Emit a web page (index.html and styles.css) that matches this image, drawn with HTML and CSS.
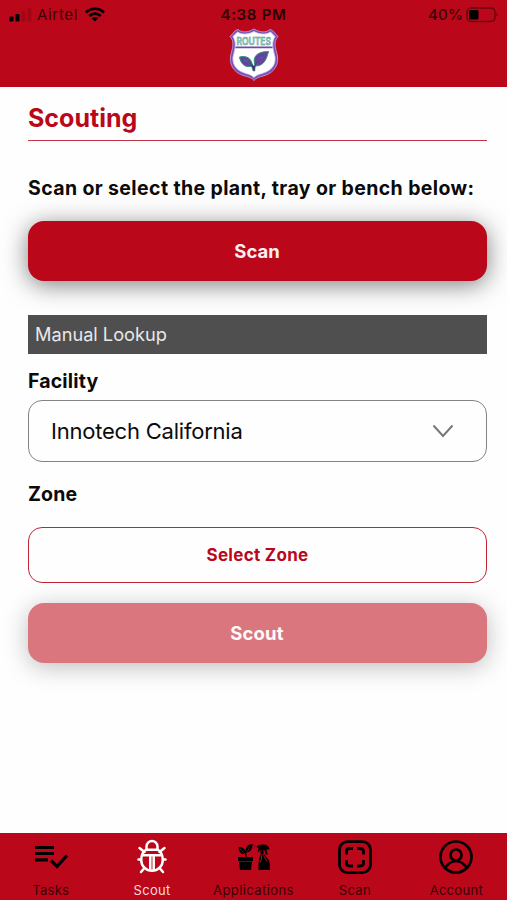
FILE: index.html
```html
<!DOCTYPE html>
<html lang="en">
<head>
<meta charset="utf-8">
<title>Scouting</title>
<link rel="stylesheet" href="styles.css">
</head>
<body>
<div class="app">
  <header class="header">
    <div class="status">
      <div class="carrier">
        <svg class="signal" width="25" height="16" viewBox="0 0 25 16"><rect x="1.500" y="10.500" width="4" height="5" rx="1"/><rect x="7.500" y="8" width="4" height="7.500" rx="1"/><g opacity=".12"><rect x="13.500" y="5" width="4" height="10.500" rx="1"/><rect x="19.500" y="2" width="4" height="13.500" rx="1"/></g></svg>
        <span class="carrier-name">Airtel</span>
        <svg class="wifi" width="20" height="15" viewBox="0 0 20 15" fill="none" stroke="#000" stroke-width="2.700"><path d="M1 5.500C6 .500 14 .500 19 5.500"/><path d="M4.300 9C7.500 5.700 12.500 5.700 15.700 9"/><path d="M10 14.500 6.700 11.300C8.500 9.500 11.500 9.500 13.300 11.300Z" fill="#000" stroke="none"/></svg>
      </div>
      <span class="time">4:38 PM</span>
      <div class="power">
        <span class="percent">40%</span>
        <svg width="33" height="16" viewBox="0 0 33 16"><rect x="1" y="1" width="28" height="13.500" rx="4" fill="none" stroke="#000" stroke-opacity=".42" stroke-width="1.500"/><rect x="3" y="3" width="9.500" height="9.500" rx="1.500"/><path d="M30.500 5q2.500 2.500 0 5Z" opacity=".4"/></svg>
      </div>
    </div>
    <svg class="logo" width="50" height="54" viewBox="0 0 50 54">
      <path d="M6.500 2.500L9 1.500C13 5 19 4.500 25 1C31 4.500 37 5 41 1.500L43.500 2.500L49 8.500C44 14 46.500 20 48.500 28C50 40 42 46 34 48C30 49 27 50 25 52.500C23 50 20 49 16 48C8 46 0 40 1.500 28C3.500 20 6 14 1 8.500Z" fill="#7951b4" stroke="#b58fd0" stroke-width="1"/>
      <path d="M8.500 4C13 7 20 6.500 25 3.500C30 6.500 37 7 41.500 4L46 8.500C42 15 44 21 46 29C47 39 40 43.500 33 45.500C29 46.500 27 47.500 25 49.500C23 47.500 21 46.500 17 45.500C10 43.500 3 39 4 29C6 21 8 15 4 8.500Z" fill="#fff" stroke="#dccded" stroke-width=".8"/>
      <path d="M6.500 19.300H43.500" stroke="#704aa8" stroke-width="1.800"/>
      <text x="7.500" y="16.500" class="logo-text" textLength="34.500" lengthAdjust="spacingAndGlyphs">ROUTES</text>
      <g fill="#6541a2" stroke="#319277" stroke-width="1"><path d="M10.500 29C18 27 23 31 23.500 38C17 40 12 37 10.500 29Z"/><path d="M39.500 23.500C28 23.500 22.500 29 26.500 38C35 38 37.500 31 39.500 23.500Z"/><path d="M15 32Q22 34 24 43L26 43Q25 36 34 29Q27 32 25 38Q21 33 15 32Z" fill="#48327b" stroke-width=".5"/></g>
    </svg>
  </header>
  <main class="content">
    <h1 class="title">Scouting</h1>
    <p class="prompt">Scan or select the plant, tray or bench below:</p>
    <button class="primary">Scan</button>
    <h2 class="section">Manual Lookup</h2>
    <div class="label facility">Facility</div>
    <div class="select"><span>Innotech California</span><svg width="22" height="14" viewBox="0 0 22 14" fill="none" stroke="#777" stroke-width="2"><path d="m1.500 1.500 9.500 10.500 9.500-10.500"/></svg></div>
    <div class="label zone">Zone</div>
    <button class="outline">Select Zone</button>
    <button class="primary disabled">Scout</button>
  </main>
  <nav class="tabs">
    <a class="tab"><svg width="36" height="36" viewBox="0 0 36 36" fill="none" stroke="#000" stroke-width="3.200"><path d="M2 8.500h19M2 14.500h19M2 20.800h13M18 21.500l6 6 10-11"/></svg><span class="name tasks">Tasks</span></a>
    <a class="tab active"><svg width="36" height="36" viewBox="0 0 36 36" fill="none" stroke="#fff" stroke-width="2.500" stroke-linecap="round"><path d="M12.500 10.500V7.500a5.500 5.500 0 0 1 11 0v3"/><path d="M12 10.800h12q4.800 3 4.800 10.200a10.800 10.800 0 0 1-21.600 0q0-7.200 4.800-10.200Z"/><path d="M8.500 16.300h19M16.300 16.500v14.200M19.700 16.500v14.200M5.500 9l5 4M30.500 9l-5 4M4.500 20.500H7M29 20.500h2.500M10.500 29 7 33M25.500 29l3.500 4"/></svg><span class="name scout">Scout</span></a>
    <a class="tab"><svg width="36" height="36" viewBox="0 0 36 36"><path d="M3 18h15v4h-1L16 31H5L4 22H3ZM10 18V15Q4 16 3.500 8Q9 8 10.500 12Q11 5 17.500 5Q18 12 11.500 14V18Z"/><path d="m11 15 4-7M5 10l5 5M4 22.500h13" fill="none" stroke="#a30819" stroke-width=".7"/><path d="M22 7q2-2 7-1.500Q34 6 34.500 10.500h-3Q32 14 33 15.500h-2Q29.500 13 29.500 11H28.500v4h-3V10.500q-1 2-3 3 1-3 1-4.500h-1ZM25.500 15.500h4l4.500 6q1 2 1 9.500H23.500q-.5-9 2-15.500Z"/><path d="M26.500 16.500v4l-1.500 3M28.500 16.500l3.500 6" fill="none" stroke="#b30a1b" stroke-width="1"/><path d="M18.500 6.500h1M18.500 9h1M20.500 7.500h1" stroke="#000" stroke-width=".8" opacity=".6"/></svg><span class="name applications">Applications</span></a>
    <a class="tab"><svg width="36" height="36" viewBox="0 0 36 36" fill="none" stroke="#000" stroke-width="2.800"><rect x="2.500" y="2.700" width="31" height="31" rx="8"/><path d="M9.500 15.500v-3q0-3 3-3H16M20 9.500h3.500q3 0 3 3v3M26.500 21v3q0 3-3 3H20M16 27h-3.500q-3 0-3-3V21"/></svg><span class="name scan">Scan</span></a>
    <a class="tab"><svg width="36" height="36" viewBox="0 0 36 36" fill="none" stroke="#000" stroke-width="2.700"><circle cx="18" cy="18" r="15.500"/><circle cx="18" cy="16" r="5.500"/><path d="M7 29Q12 22 18 22T29 29"/></svg><span class="name account">Account</span></a>
  </nav>
</div>
</body>
</html>
```
FILE: styles.css
```css
* { box-sizing: border-box; }
body { margin: 0; background: #fefefe; font-family: Inter, "Liberation Sans", sans-serif; color: #0b0b0c; }
.app { height: 900px; display: flex; flex-direction: column; }
.header { height: 87px; flex: none; background: #ba0719; display: flex; flex-direction: column; align-items: center; }
.status { width: 100%; height: 28px; display: grid; grid-template-columns: 1fr auto 1fr; align-items: center; padding: 1px 8px 0; font-size: 15px; line-height: 28px; }
.carrier, .power { display: flex; align-items: center; }
.carrier-name { margin-left: 4px; letter-spacing: .65px; color: #3b0307; }
.wifi { margin-left: 7px; margin-top: -2px; }
.signal { margin-top: -2px; }
.time { font-weight: 600; letter-spacing: .7px; color: #290205; }
.power { justify-content: flex-end; gap: 3px; color: #3b0307; }
.percent { font-weight: 500; letter-spacing: .2px; }
.logo { flex: none; }
.logo-text { font: 600 10px Inter, sans-serif; fill: #c5ddda; stroke: #328f78; stroke-width: .5px; }
.content { flex: 1; display: flex; flex-direction: column; padding: 0 20px 0 28px; }
h1, h2, p { margin: 0; }
.title { height: 54px; border-bottom: 1.500px solid #c53444; color: #ba0719; font-size: 25px; font-weight: 650; line-height: 62px; }
.prompt { margin-top: 31px; height: 33px; font-size: 19.500px; font-weight: 700; letter-spacing: .38px; line-height: 32px; white-space: nowrap; }
button { font-family: inherit; display: flex; align-items: center; justify-content: center; padding: 0; flex: none; }
.primary { margin-top: 16px; height: 60px; border: 0; border-radius: 16px; padding-right: 1px; background: #ba0719; color: #fbf0f1; font-size: 18.500px; font-weight: 700; box-shadow: 0 4px 24px rgba(0,0,0,.5); }
.section { margin-top: 34px; height: 39px; padding-left: 7px; background: #4f4f4f; color: #e8e8e8; font-size: 18.200px; font-weight: 400; line-height: 39px; }
.label { font-size: 19.500px; font-weight: 700; line-height: 27px; letter-spacing: .15px; height: 26px; }
.facility { margin-top: 14px; }
.select { margin-top: 6px; height: 62px; border: 1.500px solid #838383; border-radius: 14px; padding: 0 32px 0 22px; display: flex; align-items: center; justify-content: space-between; font-size: 22px; letter-spacing: -.22px; }
.zone { margin-top: 19px; }
.outline { margin-top: 20px; height: 56px; border: 1.500px solid #c02435; border-radius: 14px; background: #fefefe; color: #ba0719; font-size: 17px; font-weight: 700; letter-spacing: .3px; padding-bottom: 1px; }
.disabled { margin-top: 20px; background: #da777e; color: #fffafa; letter-spacing: .2px; box-shadow: 0 4px 24px rgba(0,0,0,.26); }
.tabs { flex: none; height: 67px; background: #ba0719; display: grid; grid-template-columns: repeat(5, 1fr); }
.tab { display: flex; flex-direction: column; align-items: center; padding-top: 6px; color: #3b0307; font-size: 13px; }
.tab svg { flex: none; }
.name { margin-top: 6px; line-height: 18px; letter-spacing: .3px; }
.applications { letter-spacing: .42px; }
.active { color: #fbd9dc; }
```
